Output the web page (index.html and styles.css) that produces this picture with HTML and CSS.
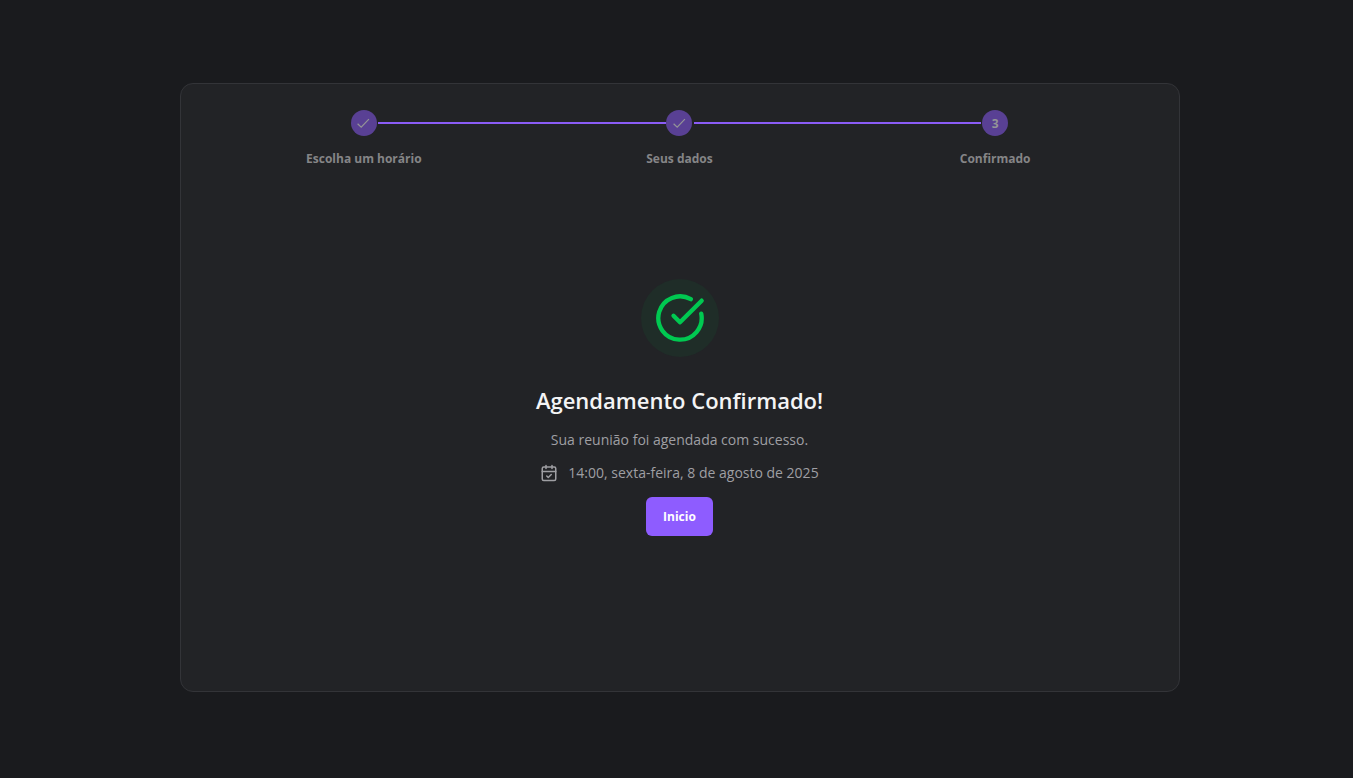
FILE: index.html
```html
<!DOCTYPE html>
<html lang="pt-BR">
<head>
  <meta charset="utf-8">
  <meta name="viewport" content="width=device-width, initial-scale=1">
  <title>Agendamento Confirmado</title>
  <link rel="stylesheet" href="styles.css">
</head>
<body>
  <main class="card">
    <ol class="steps">
      <li class="step">
        <span class="step-marker">
          <svg class="step-check" viewBox="0 0 15 15" aria-hidden="true"><path d="M1.6 7.7 5.2 11.2 12.9 3.2"/></svg>
        </span>
        <span class="step-label">Escolha um horário</span>
      </li>
      <li class="step">
        <span class="step-marker">
          <svg class="step-check" viewBox="0 0 15 15" aria-hidden="true"><path d="M1.6 7.7 5.2 11.2 12.9 3.2"/></svg>
        </span>
        <span class="step-label">Seus dados</span>
      </li>
      <li class="step" aria-current="step">
        <span class="step-marker">3</span>
        <span class="step-label">Confirmado</span>
      </li>
    </ol>
    <section class="result">
      <div class="badge">
        <svg class="badge-icon" viewBox="0 0 24 24" aria-hidden="true">
          <path d="M21.801 10A10 10 0 1 1 17 3.335"/>
          <path d="m9 11 3 3L22 4"/>
        </svg>
      </div>
      <h1 class="title">Agendamento Confirmado!</h1>
      <p class="message">Sua reunião foi agendada com sucesso.</p>
      <p class="date">
        <svg class="date-icon" viewBox="0 0 24 24" aria-hidden="true">
          <path d="M8 2v4M16 2v4M3 10h18"/>
          <rect width="18" height="18" x="3" y="4" rx="2"/>
          <path d="m9 16 2 2 4-4"/>
        </svg>
        <span>14:00, sexta-feira, 8 de agosto de 2025</span>
      </p>
      <button class="button" type="button">Inicio</button>
    </section>
  </main>
</body>
</html>
```
FILE: styles.css
```css
* {
  box-sizing: border-box;
}

body {
  margin: 0;
  min-height: 100vh;
  padding: 83px 24px 86px 31px;
  display: flex;
  justify-content: center;
  background: #1a1b1e;
  color: #9f9fa3;
  font-family: "Segoe UI", "Open Sans", "Noto Sans", sans-serif;
}

.card {
  width: 100%;
  max-width: 1000px;
  padding: 26px 26px 26px 25px;
  display: flex;
  flex-direction: column;
  background: #222326;
  border: 1px solid #333438;
  border-radius: 13px;
}

.steps {
  margin: 0;
  padding: 0;
  display: grid;
  grid-template-columns: repeat(3, 1fr);
  list-style: none;
}

.step {
  position: relative;
  display: flex;
  flex-direction: column;
  align-items: center;
  gap: 13px;
}

.step + .step::before {
  content: "";
  position: absolute;
  top: 12px;
  left: calc(-50% + 14px);
  width: calc(100% - 28px);
  height: 2px;
  background: #8b5cf6;
}

.step-marker {
  width: 26px;
  height: 26px;
  display: flex;
  align-items: center;
  justify-content: center;
  border-radius: 50%;
  background: #594094;
  color: #949497;
  font-size: 12px;
  font-weight: 700;
}

.step-check {
  width: 15px;
  height: 15px;
  fill: none;
  stroke: currentColor;
  stroke-width: 1.2;
}

.step-label {
  color: #858587;
  font-size: 12px;
  line-height: 20px;
  font-weight: 700;
}

.result {
  flex: 1;
  padding-bottom: 20px;
  display: flex;
  flex-direction: column;
  align-items: center;
  justify-content: center;
  text-align: center;
}

.badge {
  padding: 13px;
  border-radius: 50%;
  background: #1f2d28;
}

.badge-icon {
  display: block;
  width: 52px;
  height: 52px;
  fill: none;
  stroke: #00c951;
  stroke-width: 2;
  stroke-linecap: round;
  stroke-linejoin: round;
}

.title {
  margin: 26px 0 0;
  color: #f4f4f5;
  font-size: 22px;
  line-height: 34px;
  font-weight: 600;
}

.message {
  margin: 10px 0 0;
  font-size: 14px;
  line-height: 26px;
}

.date {
  margin: 7px 0 0;
  display: flex;
  align-items: center;
  gap: 10px;
  font-size: 14px;
  line-height: 26px;
}

.date-icon {
  width: 18px;
  height: 18px;
  fill: none;
  stroke: currentColor;
  stroke-width: 2;
  stroke-linecap: round;
  stroke-linejoin: round;
}

.button {
  margin-top: 11px;
  padding: 9px 17px;
  border: 0;
  border-radius: 6px;
  background: #8e5cff;
  color: #ffffff;
  font: 700 12px/21px "Segoe UI", "Open Sans", "Noto Sans", sans-serif;
  cursor: pointer;
}
```
